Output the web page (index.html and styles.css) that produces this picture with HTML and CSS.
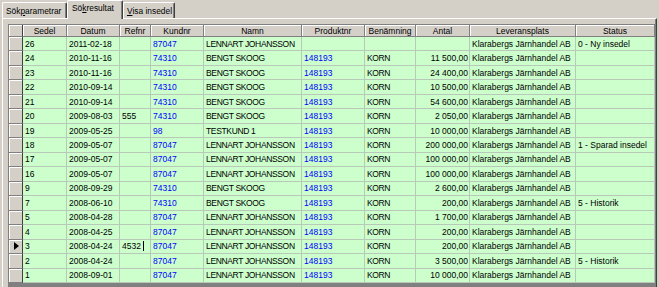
FILE: index.html
```html
<!DOCTYPE html>
<html lang="sv">
<head>
  <meta charset="UTF-8" />
  <title>Sökresultat</title>
  <link rel="stylesheet" href="styles.css">
</head>
<body>
  <div class="tabs">
    <div class="tab tab-first">Sök<u>p</u>arametrar</div>
    <div class="tab tab-active">Sö<u>k</u>resultat</div>
    <div class="tab tab-last"><u>V</u>isa insedel</div>
  </div>

  <div class="panel">
    <div class="grid" id="grid"></div>
  </div>

  <script>
    const headers = ["", "Sedel", "Datum", "Refnr", "Kundnr", "Namn", "Produktnr", "Benämning", "Antal", "Leveransplats", "Status"];
    const colClass = ["", "", "", "blue", "name", "blue", "name", "right", "", ""];
    const K = "Klarabergs Järnhandel AB";
    const LJ = "LENNART JOHANSSON";
    const BS = "BENGT SKOOG";

    const rows = [
      ["26", "2011-02-18", "", "87047", LJ, "", "", "", K, "0 - Ny insedel"],
      ["24", "2010-11-16", "", "74310", BS, "148193", "KORN", "11 500,00", K, ""],
      ["23", "2010-11-16", "", "74310", BS, "148193", "KORN", "24 400,00", K, ""],
      ["22", "2010-09-14", "", "74310", BS, "148193", "KORN", "10 500,00", K, ""],
      ["21", "2010-09-14", "", "74310", BS, "148193", "KORN", "54 600,00", K, ""],
      ["20", "2009-08-03", "555", "74310", BS, "148193", "KORN", "2 050,00", K, ""],
      ["19", "2009-05-25", "", "98", "TESTKUND 1", "148193", "KORN", "10 000,00", K, ""],
      ["18", "2009-05-07", "", "87047", LJ, "148193", "KORN", "200 000,00", K, "1 - Sparad insedel"],
      ["17", "2009-05-07", "", "87047", LJ, "148193", "KORN", "100 000,00", K, ""],
      ["16", "2009-05-07", "", "87047", LJ, "148193", "KORN", "100 000,00", K, ""],
      ["9", "2008-09-29", "", "74310", BS, "148193", "KORN", "2 600,00", K, ""],
      ["7", "2008-06-10", "", "74310", BS, "148193", "KORN", "200,00", K, "5 - Historik"],
      ["5", "2008-04-28", "", "87047", LJ, "148193", "KORN", "1 700,00", K, ""],
      ["4", "2008-04-25", "", "87047", LJ, "148193", "KORN", "200,00", K, ""],
      ["3", "2008-04-24", "4532", "87047", LJ, "148193", "KORN", "200,00", K, ""],
      ["2", "2008-04-24", "", "87047", LJ, "148193", "KORN", "3 500,00", K, "5 - Historik"],
      ["1", "2008-09-01", "", "87047", LJ, "148193", "KORN", "10 000,00", K, ""]
    ];
    const currentRow = 14;

    const grid = document.getElementById("grid");

    function cell(cls, text) {
      const el = document.createElement("div");
      el.className = cls;
      if (text) el.textContent = text;
      grid.appendChild(el);
      return el;
    }

    headers.forEach((h, i) => cell(i === 0 ? "hc sel-head" : "hc", h));

    rows.forEach((row, r) => {
      const sel = cell("sel");
      if (r === currentRow) {
        sel.innerHTML = '<svg width="5" height="8" viewBox="0 0 5 8"><polygon points="0,0 5,4 0,8" fill="#000"/></svg>';
      }
      row.forEach((val, i) => {
        const c = cell("c " + colClass[i], val);
        if (r === currentRow && i === 2) {
          c.innerHTML = '<span class="caret">' + val + '</span>';
        }
      });
    });
  </script>
</body>
</html>
```

FILE: styles.css
```css
body {
  margin: 0;
  background: #d4d0c8;
  font-family: 'Liberation Sans', Arial, sans-serif;
  font-size: 8.5px;
  color: #000;
  height: 287px;
  overflow: hidden;
}

/* tab strip */
.tabs {
  display: flex;
  align-items: flex-end;
  height: 18px;
  padding-left: 2px;
}

.tab {
  box-sizing: border-box;
  height: 16px;
  padding: 3px 0 0 3px;
  border-top: 1px solid #fff;
  border-left: 1px solid #fff;
  border-right: 1px solid #404040;
  box-shadow: inset -1px 0 #808080;
  border-radius: 2px 2px 0 0;
  font-size: 8.4px;
  white-space: nowrap;
}

.tab u {
  text-underline-offset: 1px;
}

.tab-first {
  width: 65px;
}

.tab-active {
  position: relative;
  z-index: 1;
  width: 56px;
  height: 19px;
  margin-bottom: -1px;
  padding: 2px 0 0 4px;
  background: #d4d0c8;
}

.tab-last {
  width: 52px;
}

/* panel */
.panel {
  margin: 0 2px;
  height: 263px;
  padding: 5px 1px 0 5px;
  border-top: 1px solid #fff;
  border-left: 1px solid #fff;
  border-right: 1px solid #404040;
  box-shadow: inset -1px 0 #808080;
}

/* data grid */
.grid {
  display: grid;
  grid-template-columns: 14px 44px 53px 31px 53px 98px 63px 51px 54px 106px 79px;
  grid-template-rows: 12px;
  grid-auto-rows: 14.47px;
  align-content: start;
  height: 262px;
  overflow: hidden;
  background: #808080;
  border-top: 1px solid #808080;
  border-left: 1px solid #808080;
}

.hc {
  box-sizing: border-box;
  display: flex;
  align-items: center;
  justify-content: center;
  background: #d4d0c8;
  border-right: 1px solid #808080;
  border-bottom: 1px solid #808080;
  box-shadow: inset 1px 1px #fff;
  white-space: nowrap;
  overflow: hidden;
}

.sel-head {
  border-right-color: #404040;
}

.sel {
  box-sizing: border-box;
  display: flex;
  align-items: center;
  padding-left: 5px;
  background: #d4d0c8;
  border-right: 1px solid #404040;
  border-bottom: 1px solid #808080;
  box-shadow: inset 1px 1px #fff;
}

.c {
  box-sizing: border-box;
  display: flex;
  align-items: center;
  padding: 0 1px 0 2px;
  background: #ccffcc;
  border-right: 1px solid #b9c9b9;
  border-bottom: 1px solid #b9c9b9;
  white-space: nowrap;
  overflow: hidden;
}

.blue {
  color: #0000ff;
}

.name {
  letter-spacing: -0.35px;
}

.right {
  justify-content: flex-end;
}

.caret {
  border-right: 1px solid #000;
  padding-right: 2px;
  line-height: 10px;
}
```
